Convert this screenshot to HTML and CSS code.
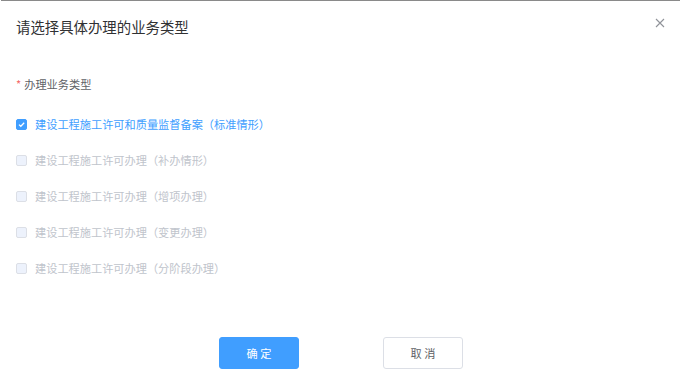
FILE: index.html
```html
<!DOCTYPE html>
<html lang="zh">
<head>
<meta charset="utf-8">
<link rel="stylesheet" href="styles.css">
</head>
<body>
<div class="dialog">
  <div class="header">
    <span class="title">请选择具体办理的业务类型</span>
    <button class="close" aria-label="关闭">
      <svg width="10" height="10" viewBox="0 0 10 10"><path d="M1 1L9 9M9 1L1 9" stroke="#909399" stroke-width="1.1" fill="none"/></svg>
    </button>
  </div>
  <div class="body">
    <div class="label"><span class="star">*</span>办理业务类型</div>
    <div class="options">
      <label class="option checked"><span class="box"><svg width="11" height="11" viewBox="0 0 11 11"><path d="M3 5.6L4.8 7.3L8.2 3.8" stroke="#fff" stroke-width="1.3" fill="none"/></svg></span><span class="text">建设工程施工许可和质量监督备案（标准情形）</span></label>
      <label class="option disabled"><span class="box"></span><span class="text">建设工程施工许可办理（补办情形）</span></label>
      <label class="option disabled"><span class="box"></span><span class="text">建设工程施工许可办理（增项办理）</span></label>
      <label class="option disabled"><span class="box"></span><span class="text">建设工程施工许可办理（变更办理）</span></label>
      <label class="option disabled"><span class="box"></span><span class="text">建设工程施工许可办理（分阶段办理）</span></label>
    </div>
  </div>
  <div class="footer">
    <button class="btn primary">确 定</button>
    <button class="btn">取 消</button>
  </div>
</div>
</body>
</html>
```
FILE: styles.css
```css
html, body {
  margin: 0;
  padding: 0;
  background: #fff;
}
body {
  font-family: "Noto Sans CJK SC", "Noto Sans", sans-serif;
}
.dialog {
  position: relative;
  width: 681px;
  height: 385px;
  box-sizing: border-box;
  border-top: 1px solid #8a8a8a;
  margin-left: 1px;
  width: 679px;
}
.header {
  padding: 16px 15px 0 15px;
  height: 20px;
}
.title {
  font-size: 14.4px;
  line-height: 20px;
  color: #303133;
  display: block;
}
.close {
  position: absolute;
  top: 17px;
  right: 15px;
  width: 10px;
  height: 10px;
  padding: 0;
  border: 0;
  background: none;
  display: flex;
}
.body {
  padding: 39px 15px 0 15px;
}
.label {
  font-size: 11.2px;
  line-height: 16px;
  color: #606266;
}
.star {
  color: #f56c6c;
  margin-right: 3px;
}
.options {
  display: flex;
  flex-direction: column;
  gap: 20px;
  margin-top: 24px;
}
.option {
  display: flex;
  align-items: center;
  height: 16px;
  font-size: 11.2px;
}
.box {
  width: 11px;
  height: 11px;
  box-sizing: border-box;
  border-radius: 2px;
  border: 1px solid #dcdfe6;
  margin-right: 8px;
  display: flex;
}
.checked .box {
  background: #409eff;
  border-color: #409eff;
}
.checked .box svg {
  margin: -1px;
}
.checked .text {
  color: #409eff;
}
.disabled .box {
  background: #edf2fc;
}
.disabled .text {
  color: #c0c4cc;
}
.footer {
  display: flex;
  justify-content: center;
  gap: 84px;
  margin-top: 61px;
  padding-left: 1px;
}
.btn {
  width: 80px;
  height: 32px;
  box-sizing: border-box;
  border: 1px solid #dcdfe6;
  border-radius: 3px;
  background: #fff;
  color: #606266;
  font-family: inherit;
  font-size: 11.2px;
  padding: 0;
}
.btn.primary {
  background: #409eff;
  border-color: #409eff;
  color: #fff;
}
```
